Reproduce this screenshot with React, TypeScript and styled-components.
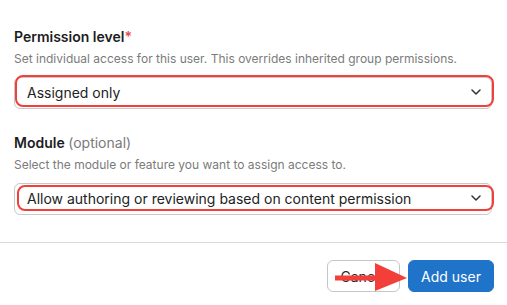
import React from "react";
import styled, { createGlobalStyle } from "styled-components";

const Global = createGlobalStyle`
  html, body { margin: 0; padding: 0; background: #ffffff; }
  body { font-family: Inter, "Noto Sans", sans-serif; }
  * { box-sizing: border-box; }
`;

const Page = styled.div`
  width: 507px;
  height: 305px;
  background: #ffffff;
  display: flex;
  flex-direction: column;
  overflow: hidden;
`;

const Body = styled.div`
  padding: 28px 15px 0 14px;
  display: flex;
  flex-direction: column;
`;

const Field = styled.div<{ $gapTop?: number }>`
  display: flex;
  flex-direction: column;
  margin-top: ${(p) => p.$gapTop ?? 0}px;
`;

const Label = styled.div`
  font-size: 14px;
  line-height: 18px;
  font-weight: 600;
  color: #1c1c1e;
`;

const Required = styled.span`
  color: #e5484d;
  font-weight: 600;
`;

const Optional = styled.span`
  color: #7a7a7a;
  font-weight: 400;
`;

const Hint = styled.div`
  margin-top: 5px;
  font-size: 12px;
  line-height: 16px;
  color: #7b7b7b;
`;

const SelectWrap = styled.div`
  position: relative;
  margin-top: 10px;
  width: 478px;
`;

const SelectBox = styled.div`
  height: 32px;
  border: 1px solid #c9c9c9;
  border-radius: 6px;
  background: #ffffff;
  display: flex;
  align-items: center;
  justify-content: space-between;
  padding: 0 10px 2px 12px;
  font-size: 14px;
  color: #222222;
`;

const Highlight = styled.div<{ $t: number; $l: number; $r: number; $b: number }>`
  position: absolute;
  top: ${(p) => p.$t}px;
  left: ${(p) => p.$l}px;
  right: ${(p) => p.$r}px;
  bottom: ${(p) => p.$b}px;
  border: 2px solid #f23f3a;
  border-radius: 8px;
  pointer-events: none;
`;

const Divider = styled.div`
  margin-top: 27px;
  height: 1px;
  background: #dadada;
`;

const Footer = styled.div`
  position: relative;
  display: flex;
  justify-content: flex-end;
  gap: 8px;
  padding: 17px 13px 0 0;
`;

const Button = styled.button<{ $primary?: boolean }>`
  height: 32px;
  width: ${(p) => (p.$primary ? 86 : 73)}px;
  padding: 0;
  border-radius: 6px;
  font-family: Inter, "Noto Sans", sans-serif;
  font-size: 14px;
  font-weight: 400;
  border: 1px solid ${(p) => (p.$primary ? "#1f74c9" : "#c6c6c6")};
  background: ${(p) => (p.$primary ? "#1f74c9" : "#ffffff")};
  color: ${(p) => (p.$primary ? "#ffffff" : "#2a2a2a")};
  cursor: pointer;
`;

const Arrow = styled.svg`
  position: absolute;
  left: 335px;
  top: 20px;
  pointer-events: none;
`;

const Chevron = () => (
  <svg width="10" height="6" viewBox="0 0 10 6" fill="none">
    <path d="M1 1l4 4 4-4" stroke="#333" strokeWidth="1.5" strokeLinecap="round" strokeLinejoin="round" />
  </svg>
);

export default function App() {
  return (
    <>
      <Global />
      <Page>
        <Body>
          <Field>
            <Label>
              Permission level<Required>*</Required>
            </Label>
            <Hint>Set individual access for this user. This overrides inherited group permissions.</Hint>
            <SelectWrap>
              <SelectBox>
                <span>Assigned only</span>
                <Chevron />
              </SelectBox>
              <Highlight $t={-2} $l={1} $r={-2} $b={2} />
            </SelectWrap>
          </Field>
          <Field $gapTop={25}>
            <Label>
              Module <Optional>(optional)</Optional>
            </Label>
            <Hint>Select the module or feature you want to assign access to.</Hint>
            <SelectWrap>
              <SelectBox>
                <span>Allow authoring or reviewing based on content permission</span>
                <Chevron />
              </SelectBox>
              <Highlight $t={2} $l={3} $r={-2} $b={4} />
            </SelectWrap>
          </Field>
        </Body>
        <Divider />
        <Footer>
          <Button>Cancel</Button>
          <Button $primary>Add user</Button>
          <Arrow width="74" height="30" viewBox="0 0 74 30">
            <rect x="0" y="12.5" width="44" height="5" fill="#f23f3a" />
            <polygon points="40,0 72,15 40,28" fill="#f23f3a" />
          </Arrow>
        </Footer>
      </Page>
    </>
  );
}
